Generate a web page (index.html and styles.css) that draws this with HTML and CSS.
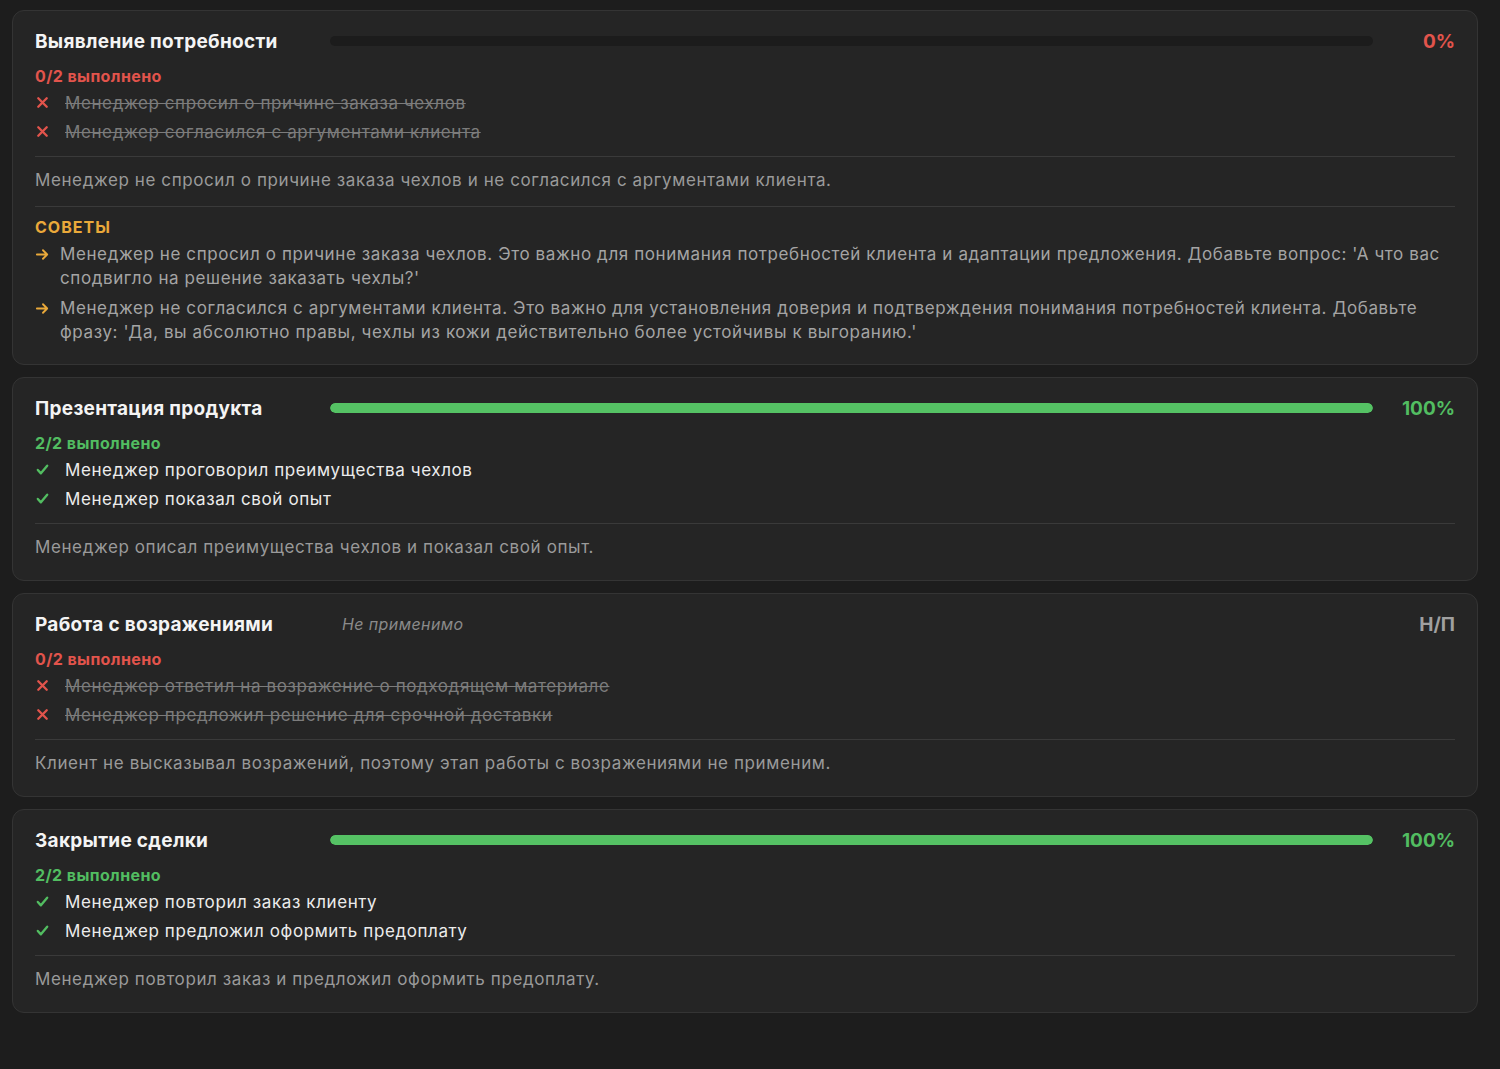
FILE: index.html
```html
<!DOCTYPE html>
<html lang="ru">
<head>
<meta charset="utf-8">
<link rel="stylesheet" href="styles.css">
</head>
<body>
<div class="list">
  <section class="card">
    <div class="head">
      <h2 class="title">Выявление потребности</h2>
      <div class="bar"><div class="fill" style="width:0%"></div></div>
      <span class="pct red">0%</span>
    </div>
    <div class="count red">0/2 выполнено</div>
    <ul class="items">
      <li class="item fail"><svg class="ic" viewBox="0 0 16 16"><path d="M3.5 3.5l9 9M12.5 3.5l-9 9"/></svg><span class="txt">Менеджер спросил о причине заказа чехлов</span></li>
      <li class="item fail"><svg class="ic" viewBox="0 0 16 16"><path d="M3.5 3.5l9 9M12.5 3.5l-9 9"/></svg><span class="txt">Менеджер согласился с аргументами клиента</span></li>
    </ul>
    <p class="summary">Менеджер не спросил о причине заказа чехлов и не согласился с аргументами клиента.</p>
    <div class="tips">
      <div class="tips-title">СОВЕТЫ</div>
      <ul class="tip-list">
        <li class="tip"><svg class="arrow" viewBox="0 0 16 16"><path d="M2 8h11M8.5 3.5L13 8l-4.5 4.5"/></svg><span>Менеджер не спросил о причине заказа чехлов. Это важно для понимания потребностей клиента и адаптации предложения. Добавьте вопрос: 'А что вас сподвигло на решение заказать чехлы?'</span></li>
        <li class="tip"><svg class="arrow" viewBox="0 0 16 16"><path d="M2 8h11M8.5 3.5L13 8l-4.5 4.5"/></svg><span>Менеджер не согласился с аргументами клиента. Это важно для установления доверия и подтверждения понимания потребностей клиента. Добавьте фразу: 'Да, вы абсолютно правы, чехлы из кожи действительно более устойчивы к выгоранию.'</span></li>
      </ul>
    </div>
  </section>

  <section class="card">
    <div class="head">
      <h2 class="title">Презентация продукта</h2>
      <div class="bar"><div class="fill" style="width:100%"></div></div>
      <span class="pct green">100%</span>
    </div>
    <div class="count green">2/2 выполнено</div>
    <ul class="items">
      <li class="item ok"><svg class="ic" viewBox="0 0 16 16"><path d="M3 8.5l3.3 3.6L13 4"/></svg><span class="txt">Менеджер проговорил преимущества чехлов</span></li>
      <li class="item ok"><svg class="ic" viewBox="0 0 16 16"><path d="M3 8.5l3.3 3.6L13 4"/></svg><span class="txt">Менеджер показал свой опыт</span></li>
    </ul>
    <p class="summary last">Менеджер описал преимущества чехлов и показал свой опыт.</p>
  </section>

  <section class="card">
    <div class="head">
      <h2 class="title">Работа с возражениями</h2>
      <span class="na-note">Не применимо</span>
      <span class="pct gray">Н/П</span>
    </div>
    <div class="count red">0/2 выполнено</div>
    <ul class="items">
      <li class="item fail"><svg class="ic" viewBox="0 0 16 16"><path d="M3.5 3.5l9 9M12.5 3.5l-9 9"/></svg><span class="txt">Менеджер ответил на возражение о подходящем материале</span></li>
      <li class="item fail"><svg class="ic" viewBox="0 0 16 16"><path d="M3.5 3.5l9 9M12.5 3.5l-9 9"/></svg><span class="txt">Менеджер предложил решение для срочной доставки</span></li>
    </ul>
    <p class="summary last">Клиент не высказывал возражений, поэтому этап работы с возражениями не применим.</p>
  </section>

  <section class="card">
    <div class="head">
      <h2 class="title">Закрытие сделки</h2>
      <div class="bar"><div class="fill" style="width:100%"></div></div>
      <span class="pct green">100%</span>
    </div>
    <div class="count green">2/2 выполнено</div>
    <ul class="items">
      <li class="item ok"><svg class="ic" viewBox="0 0 16 16"><path d="M3 8.5l3.3 3.6L13 4"/></svg><span class="txt">Менеджер повторил заказ клиенту</span></li>
      <li class="item ok"><svg class="ic" viewBox="0 0 16 16"><path d="M3 8.5l3.3 3.6L13 4"/></svg><span class="txt">Менеджер предложил оформить предоплату</span></li>
    </ul>
    <p class="summary last">Менеджер повторил заказ и предложил оформить предоплату.</p>
  </section>
</div>
</body>
</html>
```

FILE: styles.css
```css
* { box-sizing: border-box; }
html, body {
  margin: 0;
  padding: 0;
  background: #1d1d1d;
  font-family: Inter, "Noto Sans", "Liberation Sans", sans-serif;
  color: #e8e8e8;
}
.list {
  display: flex;
  flex-direction: column;
  gap: 12px;
  padding: 10px 22px 0 12px;
}
.card {
  background: #252525;
  border: 1px solid #343434;
  border-radius: 12px;
  padding: 17px 22px 20px 22px;
}
.head {
  display: flex;
  align-items: center;
  height: 26px;
}
.title {
  margin: 0;
  width: 295px;
  flex: none;
  font-size: 19px;
  font-weight: 700;
  color: #f4f4f4;
  letter-spacing: 0.3px;
}
.bar {
  flex: 1;
  height: 10px;
  border-radius: 5px;
  background: #1c1c1c;
  overflow: hidden;
}
.fill {
  height: 100%;
  background: #55c264;
  border-radius: 5px;
}
.pct {
  width: 82px;
  text-align: right;
  font-size: 19px;
  font-weight: 700;
}
.red { color: #e2544c; }
.green { color: #52bd61; }
.gray { color: #a0a0a0; }
.na-note {
  flex: 1;
  padding-left: 12px;
  font-style: italic;
  font-size: 16px;
  letter-spacing: 0.4px;
  color: #8a8a8a;
}
.count {
  margin-top: 12px;
  font-size: 16px;
  font-weight: 700;
  line-height: 20px;
  letter-spacing: 0.4px;
}
.items {
  list-style: none;
  margin: 2px 0 0;
  padding: 0 0 10px;
  border-bottom: 1px solid #3a3a3a;
}
.item {
  display: flex;
  align-items: center;
  height: 29px;
  font-size: 17px;
  letter-spacing: 0.6px;
}
.ic {
  width: 15px;
  height: 15px;
  margin-right: 15px;
  flex: none;
  fill: none;
  stroke-width: 2.5;
  stroke-linecap: round;
  stroke-linejoin: round;
}
.fail .ic { stroke: #e2544c; }
.ok .ic { stroke: #52bd61; }
.fail .txt {
  color: #7c7c7c;
  text-decoration: line-through;
}
.ok .txt { color: #ececec; }
.summary {
  margin: 0;
  padding: 12px 0 15px;
  font-size: 17px;
  line-height: 22px;
  letter-spacing: 0.6px;
  color: #9a9a9a;
  border-bottom: 1px solid #3a3a3a;
}
.summary.last {
  border-bottom: none;
  padding-bottom: 2px;
}
.tips { padding-top: 9px; }
.tips-title {
  font-size: 16px;
  font-weight: 700;
  color: #eaa93a;
  letter-spacing: 1px;
  line-height: 22px;
}
.tip-list {
  list-style: none;
  margin: 4px 0 0;
  padding: 0;
  display: flex;
  flex-direction: column;
  gap: 6px;
}
.tip {
  display: flex;
  font-size: 17px;
  line-height: 24px;
  letter-spacing: 0.6px;
  color: #a4a4a4;
}
.arrow {
  width: 15px;
  height: 15px;
  margin: 5px 10px 0 0;
  flex: none;
  fill: none;
  stroke: #eaa93a;
  stroke-width: 2;
  stroke-linecap: round;
  stroke-linejoin: round;
}
```
